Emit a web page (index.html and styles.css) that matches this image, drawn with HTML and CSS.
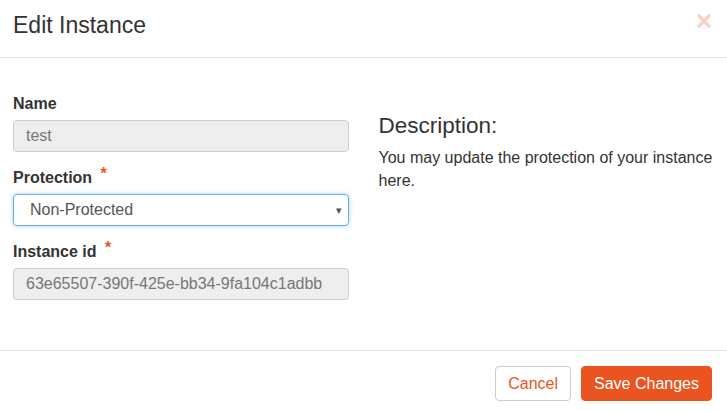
FILE: index.html
```html
<!DOCTYPE html>
<html>
<head>
<meta charset="utf-8">
<link rel="stylesheet" href="styles.css">
</head>
<body>
<div class="modal">
  <div class="modal-header">
    <h4 class="modal-title">Edit Instance</h4>
    <button class="close" type="button" aria-label="Close">
      <svg width="14" height="14" viewBox="0 0 14 14"><path d="M2 2 L12 12 M12 2 L2 12" stroke="#fad3c6" stroke-width="3.6" stroke-linecap="round"/></svg>
    </button>
  </div>
  <div class="modal-body">
    <div class="col">
      <div class="form-group">
        <label class="label">Name</label>
        <div class="input disabled">test</div>
      </div>
      <div class="form-group">
        <label class="label">Protection <span class="req">*</span></label>
        <div class="input select focused">
          <span>Non-Protected</span>
          <span class="caret">▾</span>
        </div>
      </div>
      <div class="form-group">
        <label class="label">Instance id <span class="req">*</span></label>
        <div class="input disabled">63e65507-390f-425e-bb34-9fa104c1adbb</div>
      </div>
    </div>
    <div class="col">
      <h3 class="desc-title">Description:</h3>
      <p class="desc">You may update the protection of your instance here.</p>
    </div>
  </div>
  <div class="modal-footer">
    <button class="btn btn-default" type="button">Cancel</button>
    <button class="btn btn-primary" type="button">Save Changes</button>
  </div>
</div>
</body>
</html>
```
FILE: styles.css
```css
* { box-sizing: border-box; }
html, body { margin: 0; padding: 0; background: #fff; }
body {
  font-family: "Liberation Sans", Arial, sans-serif;
  font-size: 16px;
  line-height: 1.42857;
  color: #333;
}
.modal { width: 727px; height: 411px; display: flex; flex-direction: column; }
.modal-header {
  display: flex;
  align-items: flex-start;
  justify-content: space-between;
  height: 58px;
  padding: 12px 13px 0;
  border-bottom: 1px solid #e5e5e5;
}
.modal-title { margin: 0; font-size: 23px; line-height: 26px; font-weight: 400; color: #333; }
.close {
  border: 0; background: none; padding: 0; margin-right: 3px; margin-top: 2px;
  display: flex; cursor: pointer;
}
.modal-body {
  display: grid;
  grid-template-columns: 1fr 1fr;
  column-gap: 30px;
  padding: 34px 13px 0;
  height: 292px;
}
.form-group { margin-bottom: 14px; }
.label { display: block; font-weight: 700; margin-bottom: 5px; line-height: 23px; }
.req { color: #e95420; margin-left: 4px; position: relative; top: -4px; }
.input {
  height: 32px;
  padding: 5px 12px;
  border: 1px solid #ccc;
  border-radius: 4px;
  font-size: 16px;
  color: #555;
  line-height: 20px;
}
.input.disabled { background: #eee; color: #777; }
.select { display: flex; justify-content: space-between; align-items: center; padding-left: 16px; padding-right: 6px; color: #555; }
.focused { border-color: #66afe9; box-shadow: 0 0 4px rgba(102,175,233,.6); }
.caret { font-size: 11px; color: #555; }
.desc-title { margin: 20px 0 8px; font-size: 22.5px; font-weight: 400; line-height: 1.2; color: #333; }
.desc { margin: 0; }
.modal-footer {
  display: flex;
  justify-content: flex-end;
  align-items: flex-start;
  gap: 10px;
  padding: 15px 15px 0;
  border-top: 1px solid #e5e5e5;
  flex: 1;
}
.btn {
  font-family: inherit;
  font-size: 16px;
  height: 35px;
  padding: 0 12px;
  border-radius: 4px;
  border: 1px solid #ccc;
  cursor: pointer;
}
.btn-default { background: #fff; color: #e95420; }
.btn-primary { background: #e95420; border-color: #e95420; color: #fff; }
```
